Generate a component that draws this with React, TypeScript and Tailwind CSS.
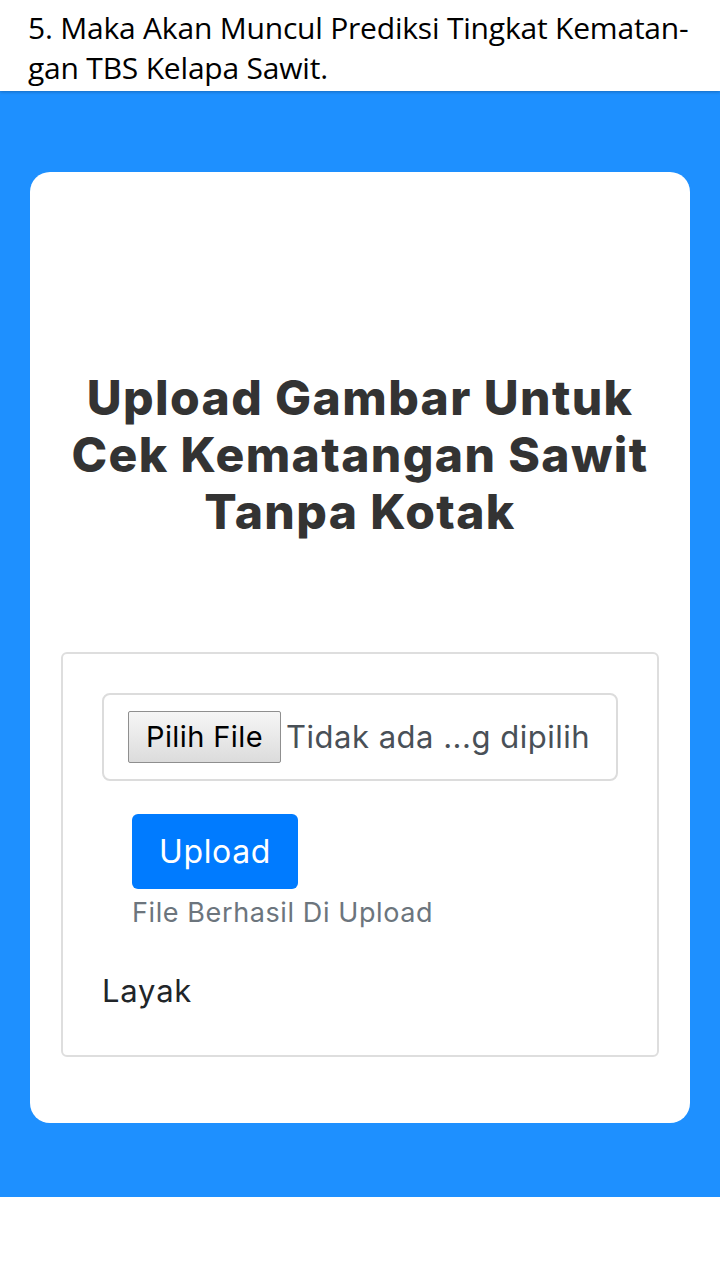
import React from "react";

export default function App() {
  const pop = { fontFamily: "Inter, 'Noto Sans', sans-serif" };
  return (
    <div className="w-[720px] h-[1280px] bg-white flex flex-col">
      <div className="h-[91px] bg-white px-[28px] pt-[8px] relative z-10 shadow-[0_1px_3px_rgba(0,0,0,0.25)]">
        <p
          className="text-[30px] leading-[40px] text-black tracking-[-0.2px] whitespace-nowrap"
          style={{ fontFamily: "'Open Sans', sans-serif" }}
        >
          5. Maka Akan Muncul Prediksi Tingkat Kematan-
          <br />
          gan TBS Kelapa Sawit.
        </p>
      </div>
      <div className="h-[1106px] bg-[#1e90ff] px-[30px] pt-[81px]">
        <div className="bg-white rounded-[20px] h-[951px] px-[20px] pt-[197px]" style={pop}>
          <h1 className="text-center text-[48px] leading-[57px] font-extrabold text-[#333] tracking-[1.4px] whitespace-nowrap">
            Upload Gambar Untuk
            <br />
            Cek Kematangan Sawit
            <br />
            Tanpa Kotak
          </h1>
          <div className="mx-[11px] mt-[112px] border-2 border-[#dedede] rounded-[6px] h-[405px] pt-[39px] px-[39px]">
            <div className="h-[88px] border-2 border-[#dcdcdc] rounded-[8px] flex items-center pl-[24px]">
              <span className="h-[52px] w-[153px] flex items-center justify-center border border-[#8f8f8f] rounded-[2px] bg-gradient-to-b from-[#f6f6f6] to-[#dcdcdc] text-[29px] tracking-[0.4px] text-black">
                Pilih File
              </span>
              <span className="ml-[5px] text-[31px] tracking-[0.5px] text-[#495057] whitespace-nowrap">
                Tidak ada ...g dipilih
              </span>
            </div>
            <div className="pl-[30px] mt-[33px]">
              <div className="w-[166px] h-[75px] bg-[#007bff] rounded-[6px] flex items-center justify-center text-white text-[32px] tracking-[0.6px]">
                Upload
              </div>
              <p className="mt-[6px] text-[27px] leading-[36px] tracking-[0.6px] text-[#6c757d]">
                File Berhasil Di Upload
              </p>
            </div>
            <p className="mt-[40px] text-[31px] leading-[40px] tracking-[0.8px] text-[#212529]">Layak</p>
          </div>
        </div>
      </div>
    </div>
  );
}
